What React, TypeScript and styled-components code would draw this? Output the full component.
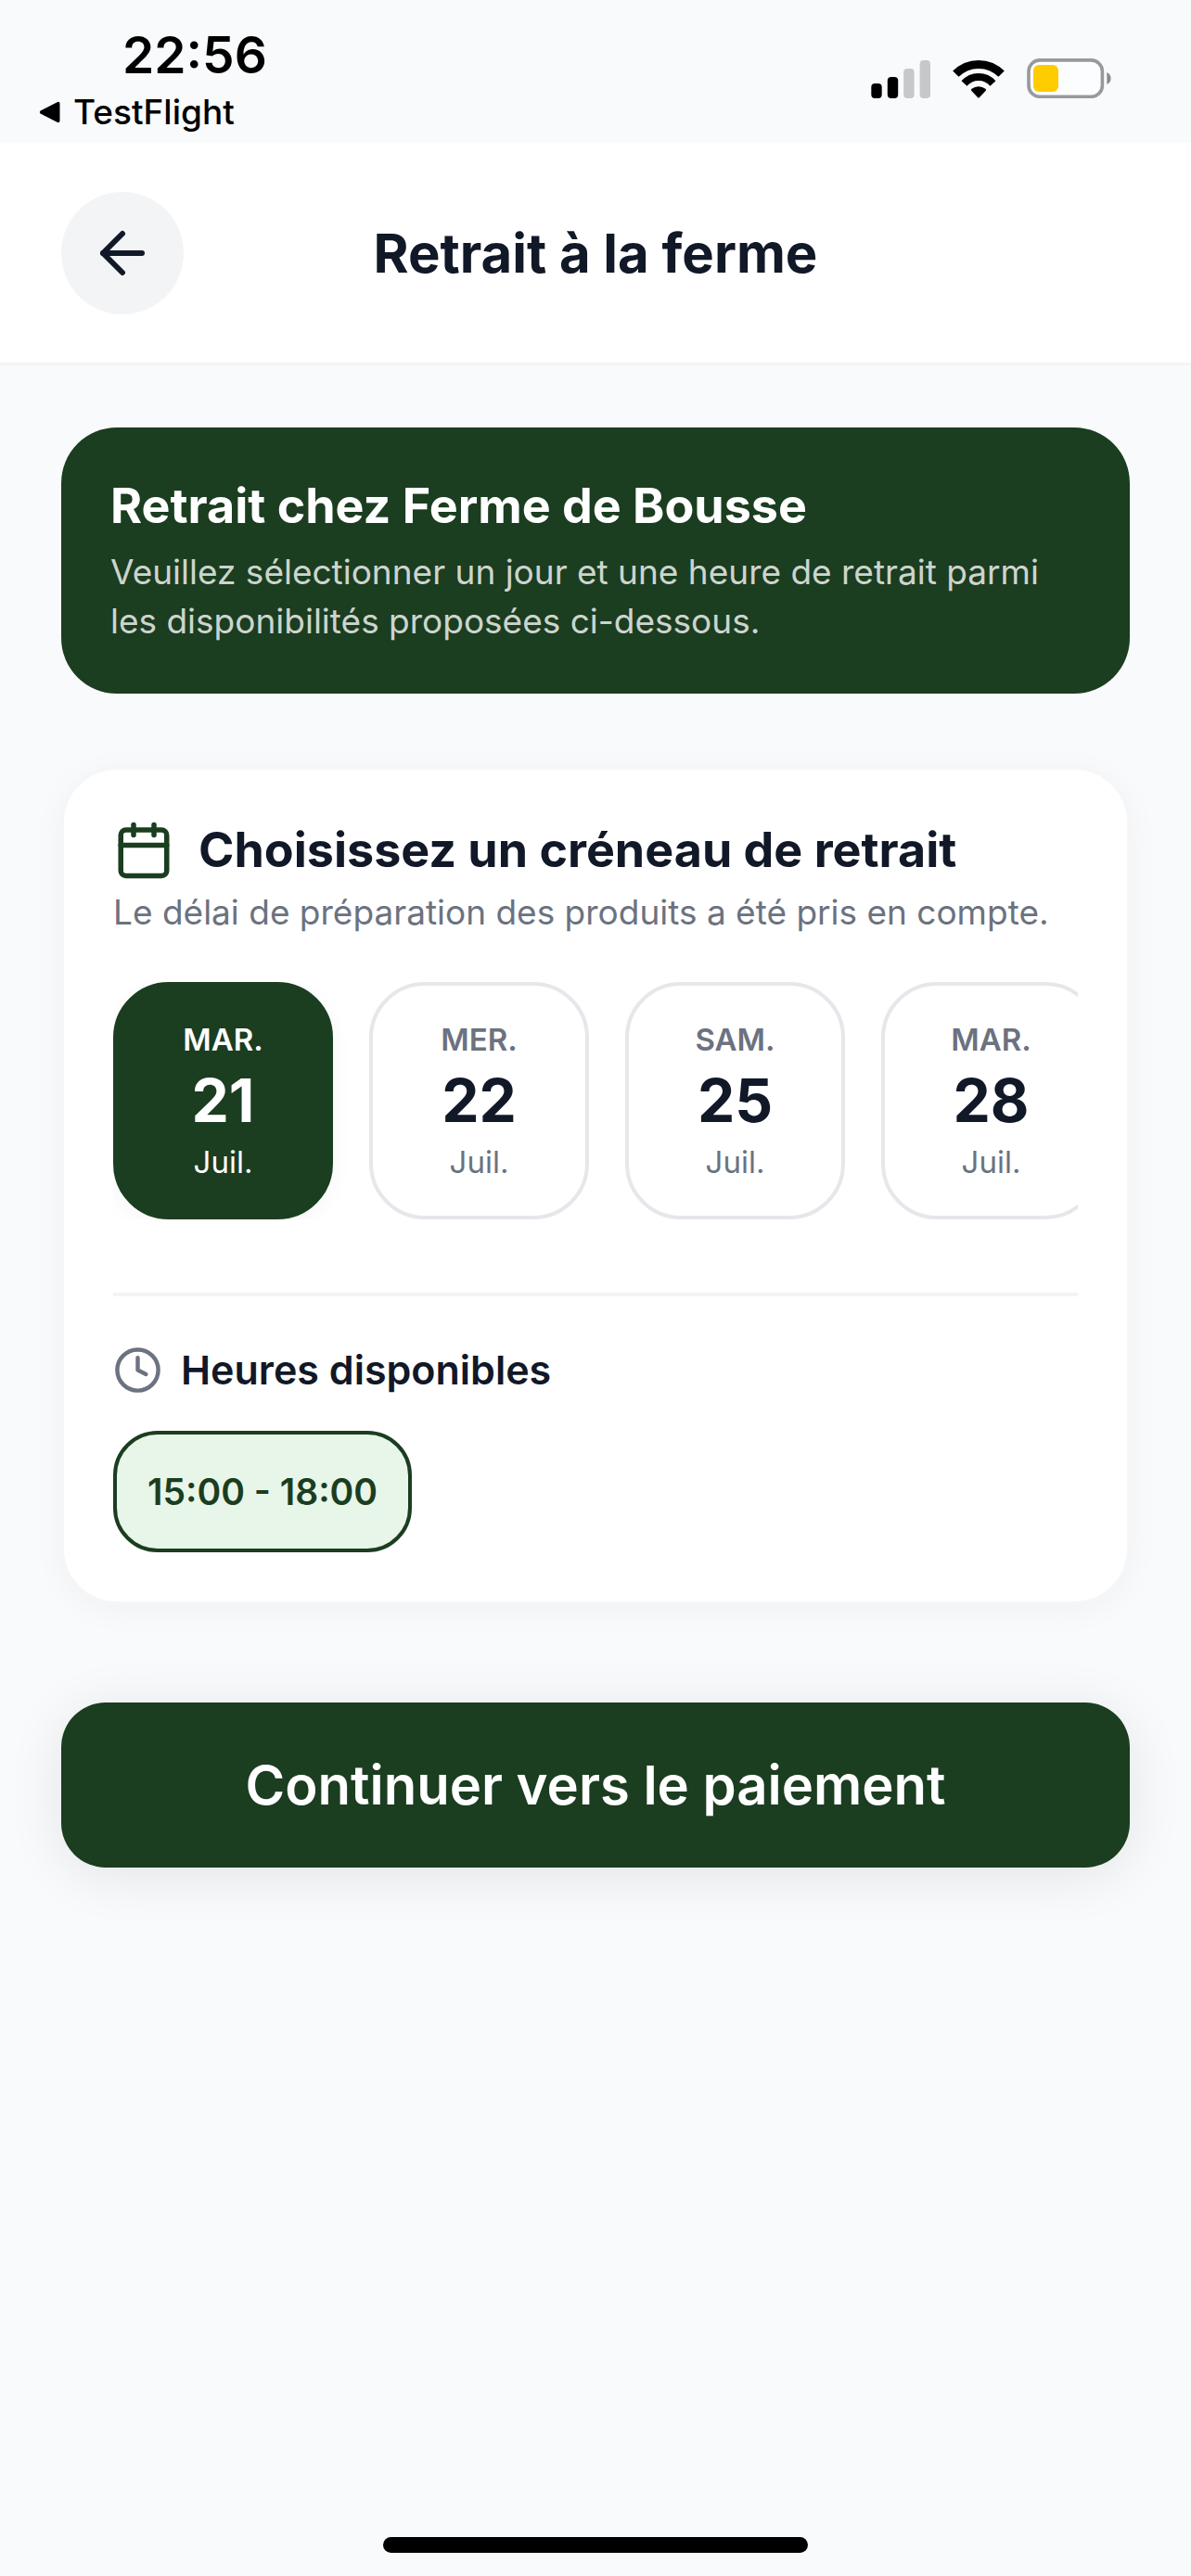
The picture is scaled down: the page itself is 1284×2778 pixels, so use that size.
import React, { useState } from "react";
import styled, { createGlobalStyle } from "styled-components";
import { ArrowLeft, Calendar, Clock } from "lucide-react";

const days = [
  { id: "mar-21", day: "MAR.", number: "21", month: "Juil." },
  { id: "mer-22", day: "MER.", number: "22", month: "Juil." },
  { id: "sam-25", day: "SAM.", number: "25", month: "Juil." },
  { id: "mar-28", day: "MAR.", number: "28", month: "Juil." },
];

const hours = ["15:00 - 18:00"];

export default function App() {
  const [selectedDay, setSelectedDay] = useState("mar-21");
  const [selectedHour, setSelectedHour] = useState("15:00 - 18:00");

  return (
    <>
      <GlobalStyle />
      <Screen>
        <StatusBar>
          <StatusLeft>
            <Time>22:56</Time>
            <BackToApp type="button">
              <svg width="23" height="24" viewBox="0 0 23 24">
                <path
                  d="M1.5 10.6 19.6 1.2Q22.5 0 22.5 3V21Q22.5 24 19.6 22.8L1.5 13.4Q0 12 1.5 10.6Z"
                  fill="#000"
                />
              </svg>
              TestFlight
            </BackToApp>
          </StatusLeft>
          <StatusIcons>
            <Signal />
            <Wifi />
            <Battery />
          </StatusIcons>
        </StatusBar>

        <Header>
          <BackButton type="button" aria-label="Retour">
            <ArrowLeft size={72} strokeWidth={2} />
          </BackButton>
          <Title>Retrait à la ferme</Title>
        </Header>

        <Main>
          <Banner>
            <BannerTitle>Retrait chez Ferme de Bousse</BannerTitle>
            <BannerText>
              Veuillez sélectionner un jour et une heure de retrait parmi
              les disponibilités proposées ci-dessous.
            </BannerText>
          </Banner>

          <Card>
            <CardHeading>
              <Calendar size={66} color="#1b3d20" />
              <CardTitle>Choisissez un créneau de retrait</CardTitle>
            </CardHeading>
            <CardText>
              Le délai de préparation des produits a été pris en compte.
            </CardText>

            <Days>
              {days.map((d) => (
                <DayButton
                  key={d.id}
                  type="button"
                  $active={d.id === selectedDay}
                  aria-pressed={d.id === selectedDay}
                  onClick={() => setSelectedDay(d.id)}
                >
                  <DayName>{d.day}</DayName>
                  <DayNumber>{d.number}</DayNumber>
                  <Month>{d.month}</Month>
                </DayButton>
              ))}
            </Days>

            <HoursSection>
              <HoursHeading>
                <Clock size={53} color="#6b7280" />
                <HoursTitle>Heures disponibles</HoursTitle>
              </HoursHeading>
              <Hours>
                {hours.map((h) => (
                  <HourButton
                    key={h}
                    type="button"
                    $active={h === selectedHour}
                    aria-pressed={h === selectedHour}
                    onClick={() => setSelectedHour(h)}
                  >
                    {h}
                  </HourButton>
                ))}
              </Hours>
            </HoursSection>
          </Card>

          <PayButton type="button">Continuer vers le paiement</PayButton>
        </Main>

        <HomeIndicator />
      </Screen>
    </>
  );
}

function Signal() {
  return (
    <svg width="64" height="42" viewBox="0 0 64 42">
      <rect x="0.3" y="26" width="11.4" height="16" rx="4" fill="#000" />
      <rect x="17.8" y="19" width="11.4" height="23" rx="4" fill="#000" />
      <rect x="35.2" y="10" width="11.4" height="32" rx="4" fill="#c7c8c9" />
      <rect x="52.6" y="1" width="11.4" height="41" rx="4" fill="#c7c8c9" />
    </svg>
  );
}

function Wifi() {
  return (
    <svg width="56" height="42" viewBox="0 0 56 42">
      <g fill="none" stroke="#000">
        <path strokeWidth="9" d="M3.4 15.7A34.5 34.5 0 0 1 52.6 15.7" />
        <path strokeWidth="8" d="M12.5 26A20.7 20.7 0 0 1 43.5 26" />
      </g>
      <path
        d="M20.4 34Q19.2 32.8 20.6 31.8A11.8 11.8 0 0 1 35.4 31.8Q36.8 32.8 35.6 34L29 41Q28 42 27 41Z"
        fill="#000"
      />
    </svg>
  );
}

function Battery() {
  return (
    <svg width="91" height="43" viewBox="0 0 91 43">
      <rect x="2" y="1.9" width="79.4" height="39.4" rx="12" fill="#fcfdfe" stroke="#98999a" strokeWidth="3.6" />
      <rect x="7" y="7" width="27" height="29" rx="6" fill="#ffcc00" />
      <path d="M86.3 15Q90.6 17 90.6 21.5T86.3 28Z" fill="#8a8b8c" />
    </svg>
  );
}

const GlobalStyle = createGlobalStyle`
  * {
    box-sizing: border-box;
  }
  body {
    margin: 0;
    background: #f9fafc;
    font-family: Inter, "Liberation Sans", sans-serif;
    color: #111827;
  }
  h1, h2, h3, p {
    margin: 0;
  }
  button {
    font-family: inherit;
    border: none;
    padding: 0;
    cursor: pointer;
  }
  svg {
    display: block;
    flex-shrink: 0;
  }
`;

const Screen = styled.div`
  min-height: 100vh;
  display: flex;
  flex-direction: column;
`;

const StatusBar = styled.div`
  display: flex;
  justify-content: space-between;
  padding: 27px 86px 9px 42px;
  color: #000;
`;

const StatusLeft = styled.div`
  display: flex;
  flex-direction: column;
  gap: 6px;
`;

const Time = styled.span`
  padding-left: 90px;
  font-size: 55px;
  line-height: 64px;
  font-weight: 600;
`;

const BackToApp = styled.button`
  display: flex;
  align-items: center;
  gap: 14px;
  background: none;
  color: #000;
  font-size: 37px;
  line-height: 48px;
  font-weight: 500;
`;

const StatusIcons = styled.div`
  display: flex;
  align-items: center;
  align-self: flex-start;
  gap: 24px;
  padding-top: 36px;
`;

const Header = styled.header`
  display: grid;
  grid-template-columns: 132px 1fr 132px;
  align-items: center;
  padding: 53px 66px 52px;
  background: #fff;
  border-bottom: 3px solid #f3f4f6;
`;

const BackButton = styled.button`
  display: flex;
  align-items: center;
  justify-content: center;
  width: 132px;
  height: 132px;
  border-radius: 50%;
  background: #f3f4f6;
  color: #111827;
`;

const Title = styled.h1`
  text-align: center;
  font-size: 58px;
  line-height: 72px;
  font-weight: 700;
`;

const Main = styled.main`
  flex: 1;
  display: flex;
  flex-direction: column;
  padding: 67px 66px;
`;

const Banner = styled.section`
  display: flex;
  flex-direction: column;
  gap: 12px;
  padding: 52px 53px;
  border-radius: 60px;
  background: #1b3d20;
  color: #fff;
`;

const BannerTitle = styled.h2`
  font-size: 52px;
  line-height: 65px;
  font-weight: 700;
`;

const BannerText = styled.p`
  font-size: 37px;
  line-height: 53px;
  color: rgba(255, 255, 255, 0.8);
`;

const Card = styled.section`
  margin-top: 79px;
  padding: 54px 53px 53px;
  border: 3px solid #f5f6f8;
  border-radius: 60px;
  background: #fff;
  box-shadow: 0 6px 36px rgba(0, 0, 0, 0.04);
`;

const CardHeading = styled.div`
  display: flex;
  align-items: center;
  gap: 26px;
`;

const CardTitle = styled.h2`
  font-size: 52px;
  line-height: 66px;
  font-weight: 700;
`;

const CardText = styled.p`
  margin-top: 10px;
  font-size: 37px;
  line-height: 48px;
  color: #6b7280;
`;

const Days = styled.div`
  display: flex;
  gap: 39px;
  margin-top: 51px;
  overflow-x: auto;
  scrollbar-width: none;
`;

const DayButton = styled.button<{ $active: boolean }>`
  flex: 0 0 237px;
  display: flex;
  flex-direction: column;
  align-items: center;
  gap: 6px;
  padding: 38px 0;
  border: 4px solid ${(p) => (p.$active ? "#1b3d20" : "#e5e7eb")};
  border-radius: 60px;
  background: ${(p) => (p.$active ? "#1b3d20" : "#fff")};
  color: ${(p) => (p.$active ? "#fff" : "#6b7280")};
  box-shadow: ${(p) => (p.$active ? "0 6px 24px rgba(0, 0, 0, 0.04)" : "none")};

  strong {
    color: ${(p) => (p.$active ? "#fff" : "#111827")};
  }
`;

const DayName = styled.span`
  font-size: 33px;
  line-height: 40px;
  font-weight: 600;
`;

const DayNumber = styled.strong`
  font-size: 64px;
  line-height: 80px;
  font-weight: 700;
`;

const Month = styled.span`
  font-size: 33px;
  line-height: 40px;
`;

const HoursSection = styled.div`
  margin-top: 79px;
  padding-top: 52px;
  border-top: 4px solid #f3f4f6;
`;

const HoursHeading = styled.div`
  display: flex;
  align-items: center;
  gap: 20px;
`;

const HoursTitle = styled.h3`
  font-size: 43px;
  line-height: 54px;
  font-weight: 600;
`;

const Hours = styled.div`
  display: flex;
  flex-wrap: wrap;
  gap: 24px;
  margin-top: 39px;
`;

const HourButton = styled.button<{ $active: boolean }>`
  padding: 39px 33px;
  border: 4px solid ${(p) => (p.$active ? "#1b3d20" : "#e5e7eb")};
  border-radius: 48px;
  background: ${(p) => (p.$active ? "#e8f5e9" : "#fff")};
  color: ${(p) => (p.$active ? "#1b3d20" : "#111827")};
  font-size: 39px;
  line-height: 45px;
  font-weight: 600;
`;

const PayButton = styled.button`
  margin-top: 106px;
  padding: 53px 54px;
  border-radius: 48px;
  background: #1b3d20;
  color: #fff;
  font-size: 58px;
  line-height: 72px;
  font-weight: 600;
  box-shadow: 0 8px 60px rgba(0, 0, 0, 0.09);
`;

const HomeIndicator = styled.div`
  align-self: center;
  width: 458px;
  height: 17px;
  margin-bottom: 25px;
  border-radius: 9px;
  background: #000;
`;
